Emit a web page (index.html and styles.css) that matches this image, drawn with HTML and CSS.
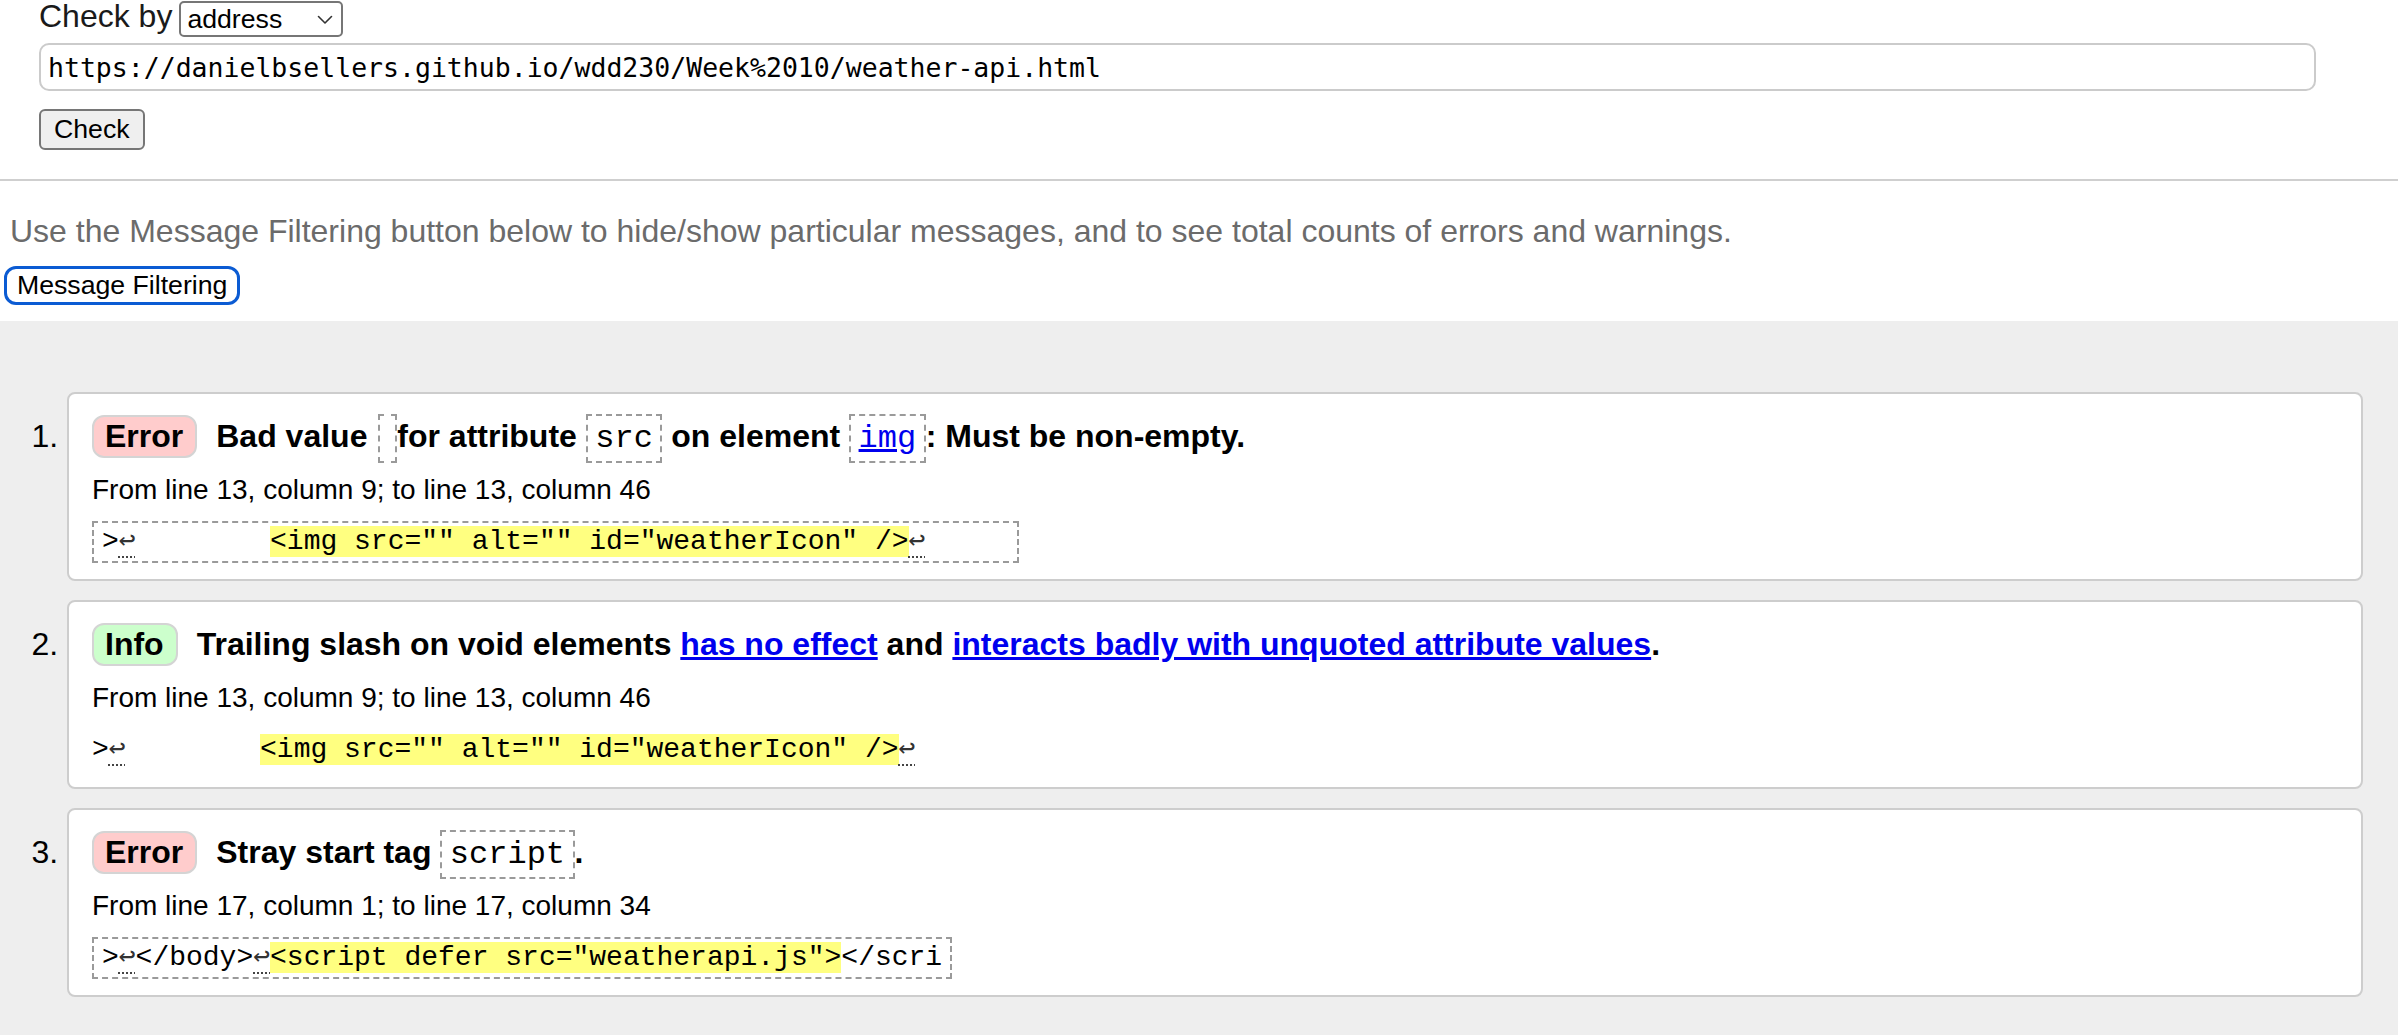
FILE: index.html
```html
<!DOCTYPE html>
<html lang="en">
<head>
<meta charset="utf-8">
<title>Nu Html Checker</title>
<link rel="stylesheet" href="styles.css">
</head>
<body>
<form class="check-form">
  <div class="by-row">
    <label class="by-label" for="docselect">Check by</label>
    <span class="select-wrap">
      <select id="docselect" class="by-select">
        <option>address</option>
        <option>file upload</option>
        <option>text input</option>
      </select>
      <svg class="chev" viewBox="0 0 16 10" width="16" height="10" aria-hidden="true"><polyline points="1.5,1.5 8,8 14.5,1.5" fill="none" stroke="#333" stroke-width="1.6" stroke-linecap="round" stroke-linejoin="round"/></svg>
    </span>
  </div>
  <input class="url" type="url" value="https://danielbsellers.github.io/wdd230/Week%2010/weather-api.html">
  <button class="check-btn" type="button">Check</button>
</form>

<section class="filters">
  <p class="hint">Use the Message Filtering button below to hide/show particular messages, and to see total counts of errors and warnings.</p>
  <button class="filter-btn" type="button">Message Filtering</button>
</section>

<section class="results">
  <ol class="messages">
    <li class="msg">
      <p class="msg-head"><strong class="badge badge-error">Error</strong>Bad value <code class="q q-empty"></code>for attribute <code class="q">src</code> on element <code class="q"><a href="#">img</a></code>: Must be non-empty.</p>
      <p class="loc">From line 13, column 9; to line 13, column 46</p>
      <p class="extract">&gt;<span class="lf">↩</span>        <mark>&lt;img src="" alt="" id="weatherIcon" /&gt;</mark><span class="lf">↩</span>     </p>
    </li>
    <li class="msg">
      <p class="msg-head"><strong class="badge badge-info">Info</strong>Trailing slash on void elements <a href="#">has no effect</a> and <a href="#">interacts badly with unquoted attribute values</a>.</p>
      <p class="loc">From line 13, column 9; to line 13, column 46</p>
      <p class="extract plain">&gt;<span class="lf">↩</span>        <mark>&lt;img src="" alt="" id="weatherIcon" /&gt;</mark><span class="lf">↩</span></p>
    </li>
    <li class="msg">
      <p class="msg-head"><strong class="badge badge-error">Error</strong>Stray start tag <code class="q">script</code>.</p>
      <p class="loc">From line 17, column 1; to line 17, column 34</p>
      <p class="extract">&gt;<span class="lf">↩</span>&lt;/body&gt;<span class="lf">↩</span><mark>&lt;script defer src="weatherapi.js"&gt;</mark>&lt;/scri</p>
    </li>
  </ol>
</section>
</body>
</html>
```
FILE: styles.css
```css
* {
  box-sizing: border-box;
}

html,
body {
  margin: 0;
  padding: 0;
}

body {
  font-family: "Liberation Sans", Arial, Helvetica, sans-serif;
  color: #000;
  background: #eee;
  min-height: 1035px;
}

/* ---------- top form ---------- */
.check-form {
  background: #fff;
  padding: 1px 82px 29px 39px;
  border-bottom: 2px solid #cfcfcf;
}

.by-row {
  display: flex;
  align-items: flex-start;
}

.by-label {
  font-size: 32px;
  line-height: 30px;
  color: #1a1a1a;
}

.select-wrap {
  position: relative;
  display: block;
  margin-left: 7px;
}

.by-select {
  -webkit-appearance: none;
  appearance: none;
  display: block;
  margin: 0;
  width: 164px;
  height: 36px;
  padding: 0 0 0 6px;
  border: 2px solid #767676;
  border-radius: 5px;
  background: #fff;
  color: #000;
  font-family: "Liberation Sans", Arial, sans-serif;
  font-size: 26.67px;
}

.chev {
  position: absolute;
  right: 10px;
  top: 14px;
  pointer-events: none;
}

.url {
  display: block;
  width: 100%;
  height: 48px;
  margin: 6px 0 0;
  padding: 0 7px;
  border: 2px solid #cbcbcb;
  border-radius: 10px;
  background: #fff;
  color: #000;
  font-family: "DejaVu Sans Mono", monospace;
  font-size: 26.5px;
}

.check-btn {
  display: block;
  margin: 18px 0 0;
  height: 41px;
  padding: 0 13px;
  border: 2px solid #767676;
  border-radius: 6px;
  background: #efefef;
  color: #000;
  font-family: "Liberation Sans", Arial, sans-serif;
  font-size: 26.67px;
  line-height: 37px;
}

/* ---------- filter area ---------- */
.filters {
  background: #fff;
  padding: 32px 0 16px;
}

.hint {
  margin: 0 0 17px 10px;
  font-size: 32px;
  line-height: 36px;
  color: #6b6b6b;
}

.filter-btn {
  display: block;
  margin: 0 0 0 4px;
  height: 39px;
  padding: 0 10px;
  border: 3px solid #0b5bd3;
  border-radius: 12px;
  background: #fff;
  color: #000;
  font-family: "Liberation Sans", Arial, sans-serif;
  font-size: 26.67px;
  line-height: 33px;
}

/* ---------- results ---------- */
.results {
  background: #eee;
}

.messages {
  margin: 0;
  padding: 71px 35px 20px 67px;
  list-style: decimal outside;
  font-size: 32px;
}

.msg {
  background: #fff;
  border: 2px solid #cdcdcd;
  border-radius: 8px;
  padding: 18px 24px 16px 23px;
  margin-bottom: 19px;
}

.msg p {
  margin: 0;
}

.msg-head {
  font-weight: bold;
  line-height: 48px;
}

.badge {
  display: inline-block;
  line-height: 39px;
  padding: 0 12px 0 11px;
  border: 2px solid #d4d4d4;
  border-radius: 12px;
  margin-right: 19px;
}

.badge-error {
  background: #ffcccc;
}

.badge-info {
  background: #ccffcc;
}

.msg-head a {
  color: #0000ee;
  text-decoration: underline;
}

.q {
  font-family: "Liberation Mono", "Courier New", monospace;
  font-weight: normal;
  font-size: 32px;
  line-height: 32px;
  padding: 4px 7.5px;
  border: 2px dashed #9a9a9a;
}

.q-empty {
  margin-left: 2px;
}

.msg .loc {
  margin-top: 14px;
  font-size: 28px;
  line-height: 32px;
}

.msg .extract {
  margin-top: 15px;
  width: fit-content;
  padding: 3px 8px;
  border: 2px dashed #9a9a9a;
  font-family: "Liberation Mono", "Courier New", "DejaVu Sans Mono", monospace;
  font-size: 28px;
  line-height: 32px;
  white-space: pre;
}

.msg .extract.plain {
  border-color: transparent;
  border-left: 0;
  border-right: 0;
  padding-left: 0;
  padding-right: 0;
}

.extract mark {
  background: #ffff80;
  color: inherit;
}

.lf {
  display: inline-block;
  width: 1ch;
  text-align: center;
  color: #333;
  text-decoration: underline dotted #444;
  text-decoration-thickness: 2px;
  text-underline-offset: 7px;
}
```
